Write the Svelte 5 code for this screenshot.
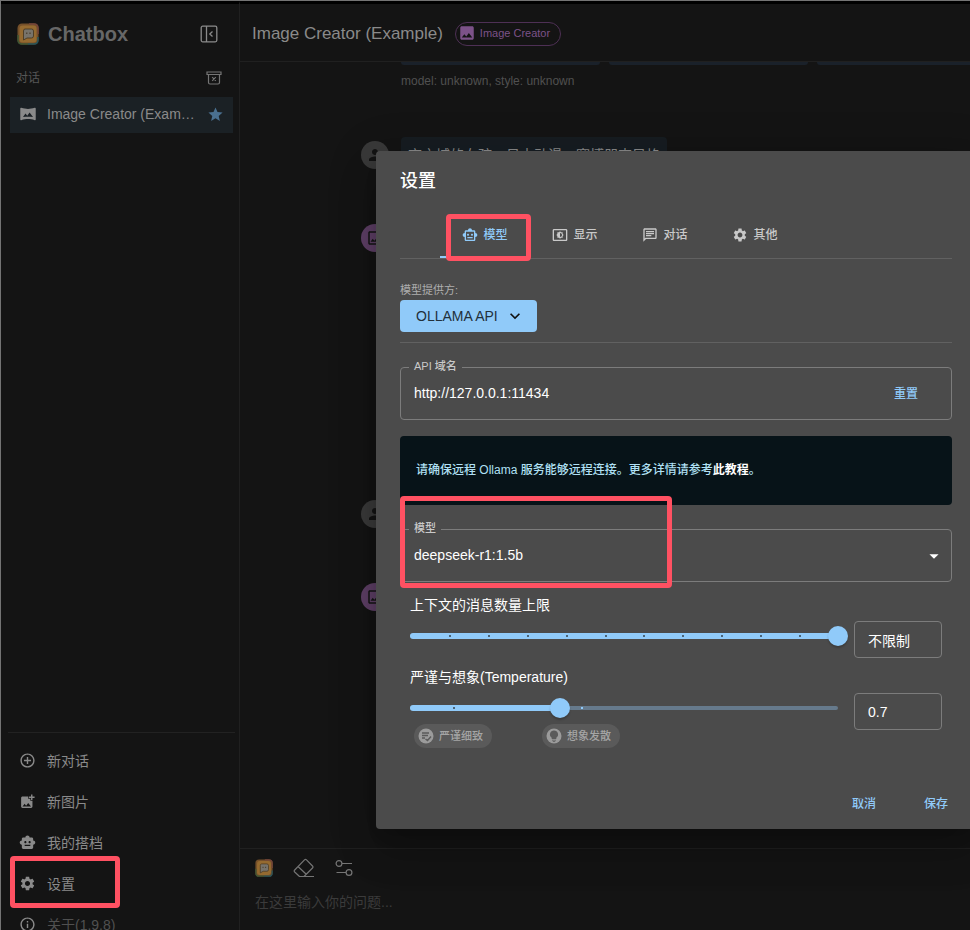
<script>
  const icons = {
    image: 'M21 19V5c0-1.1-.9-2-2-2H5c-1.1 0-2 .9-2 2v14c0 1.1.9 2 2 2h14c1.1 0 2-.9 2-2zM8.5 13.5l2.5 3.01L14.5 12l4.5 6H5l3.5-4.5z',
    imageOutline: 'M19 5v14H5V5h14m0-2H5c-1.1 0-2 .9-2 2v14c0 1.1.9 2 2 2h14c1.1 0 2-.9 2-2V5c0-1.1-.9-2-2-2zm-4.86 8.86-3 3.87L9 13.14 6 17h12l-3.86-5.14z',
    pano: 'M22.2 2.8C18.500 4 15 4.400 12 4.400S5.500 4 1.800 2.800C1 2.600.4 3 .4 3.900v16.200c0 .9.6 1.300 1.400 1.100 3.700-1.200 7.200-1.600 10.200-1.600s6.500.4 10.200 1.600c.8.200 1.400-.2 1.400-1.100V3.900c0-.9-.6-1.300-1.400-1.100zM4.500 16.500l3.700-5.300 2.700 3.500 3.500-5 5.100 6.800c-5-.7-10-.7-15 0z',
    star: 'M12 17.27 18.18 21l-1.64-7.03L22 9.24l-7.19-.61L12 2 9.19 8.63 2 9.24l5.46 4.73L5.82 21z',
    settings: 'M19.14 12.94c.04-.3.06-.61.06-.94 0-.32-.02-.64-.07-.94l2.03-1.58c.18-.14.23-.41.12-.61l-1.92-3.32c-.12-.22-.37-.29-.59-.22l-2.39.96c-.5-.38-1.03-.7-1.62-.94l-.36-2.54c-.04-.24-.24-.41-.48-.41h-3.84c-.24 0-.43.17-.47.41l-.36 2.54c-.59.24-1.13.57-1.62.94l-2.39-.96c-.22-.08-.47 0-.59.22L2.74 8.87c-.12.21-.08.47.12.61l2.03 1.58c-.05.3-.09.63-.09.94s.02.64.07.94l-2.03 1.58c-.18.14-.23.41-.12.61l1.92 3.32c.12.22.37.29.59.22l2.39-.96c.5.38 1.03.7 1.62.94l.36 2.54c.05.24.24.41.48.41h3.84c.24 0 .44-.17.47-.41l.36-2.54c.59-.24 1.13-.56 1.62-.94l2.39.96c.22.08.47 0 .59-.22l1.92-3.32c.12-.22.07-.47-.12-.61l-2.01-1.58zM12 15.6c-1.98 0-3.6-1.62-3.6-3.6s1.62-3.6 3.6-3.6 3.6 1.62 3.6 3.6-1.62 3.6-3.6 3.6z',
    robot: 'M20 9V7c0-1.1-.9-2-2-2h-3c0-1.66-1.34-3-3-3S9 3.34 9 5H6c-1.1 0-2 .9-2 2v2c-1.66 0-3 1.34-3 3s1.34 3 3 3v4c0 1.1.9 2 2 2h12c1.1 0 2-.9 2-2v-4c1.66 0 3-1.34 3-3s-1.34-3-3-3zM7.5 11.5c0-.83.67-1.5 1.5-1.5s1.5.67 1.5 1.5S9.83 13 9 13s-1.5-.67-1.5-1.5zM16 17H8v-2h8v2zm-1-4c-.83 0-1.5-.67-1.5-1.5S14.17 10 15 10s1.5.67 1.5 1.5S15.83 13 15 13z',
    robotOutline: 'M20 9V7c0-1.1-.9-2-2-2h-3c0-1.66-1.34-3-3-3S9 3.34 9 5H6c-1.1 0-2 .9-2 2v2c-1.66 0-3 1.34-3 3s1.34 3 3 3v4c0 1.1.9 2 2 2h12c1.1 0 2-.9 2-2v-4c1.66 0 3-1.34 3-3s-1.34-3-3-3zm-2 10H6V7h12v12zm-9-6c-.83 0-1.5-.67-1.5-1.5S8.17 10 9 10s1.5.67 1.5 1.5S9.83 13 9 13zm7.5-1.5c0 .83-.67 1.5-1.5 1.5s-1.5-.67-1.5-1.5.67-1.5 1.5-1.5 1.5.67 1.5 1.5zM8 15h8v2H8v-2z',
    brightness: 'M21 3H3c-1.1 0-2 .9-2 2v14c0 1.1.9 2 2 2h18c1.1 0 2-.9 2-2V5c0-1.1-.9-2-2-2zm0 16.01H3V4.99h18v14.02zM8 16h2.5l1.5 1.5 1.5-1.5H16v-2.5l1.5-1.5-1.5-1.5V8h-2.5L12 6.5 10.5 8H8v2.5L6.5 12 8 13.5V16zm4-7c1.66 0 3 1.34 3 3s-1.34 3-3 3V9z',
    chat: 'M4 4h16v12H5.17L4 17.17V4m0-2c-1.1 0-1.99.9-1.99 2L2 22l4-4h14c1.1 0 2-.9 2-2V4c0-1.1-.9-2-2-2H4zm2 10h8v2H6v-2zm0-3h12v2H6V9zm0-3h12v2H6V6z',
    add: 'M13 7h-2v4H7v2h4v4h2v-4h4v-2h-4V7zm-1-5C6.48 2 2 6.48 2 12s4.48 10 10 10 10-4.48 10-10S17.52 2 12 2zm0 18c-4.41 0-8-3.59-8-8s3.59-8 8-8 8 3.59 8 8-3.59 8-8 8z',
    addPhoto: 'M19 7v2.99s-1.99.01-2 0V7h-3s.01-1.99 0-2h3V2h2v3h3v2h-3zm-3 4V8h-3V5H5c-1.1 0-2 .9-2 2v12c0 1.1.9 2 2 2h12c1.1 0 2-.9 2-2v-8h-3zM5 19l3-4 2 3 3-4 4 5H5z',
    info: 'M11 7h2v2h-2zm0 4h2v6h-2zm1-9C6.48 2 2 6.48 2 12s4.48 10 10 10 10-4.48 10-10S17.52 2 12 2zm0 18c-4.41 0-8-3.59-8-8s3.59-8 8-8 8 3.59 8 8-3.59 8-8 8z',
    person: 'M12 12c2.21 0 4-1.79 4-4s-1.79-4-4-4-4 1.79-4 4 1.79 4 4 4zm0 2c-2.67 0-8 1.34-8 4v2h16v-2c0-2.66-5.33-4-8-4z',
    down: 'M7.41 8.59 12 13.17l4.59-4.58L18 10l-6 6-6-6 1.41-1.41z',
    drop: 'M7 10l5 5 5-5z'
  };

  const nav = [
    { icon: 'add', text: '新对话' },
    { icon: 'addPhoto', text: '新图片' },
    { icon: 'robot', text: '我的搭档' },
    { icon: 'settings', text: '设置', marked: true },
    { icon: 'info', text: '关于(1.9.8)', dim: true }
  ];
  const tabs = [
    { icon: 'robotOutline', text: '模型' },
    { icon: 'brightness', text: '显示' },
    { icon: 'chat', text: '对话' },
    { icon: 'settings', text: '其他' }
  ];

  let activeTab = $state(0);
  let host = $state('http://127.0.0.1:11434');
  let model = $state('deepseek-r1:1.5b');
  let context = $state(22);
  let temperature = $state(0.7);
  const contextText = $derived(context >= 22 ? '不限制' : String(context));
  const contextMarks = [2, 4, 6, 8, 10, 12, 14, 16, 18, 20];
  const temperatureMarks = [0.2, 0.8];
</script>

{#snippet icon(name, size)}
  <svg class="icon" width={size} height={size} viewBox="0 0 24 24" aria-hidden="true"><path d={icons[name]} /></svg>
{/snippet}

{#snippet logo(size)}
  <svg width={size} height={size} viewBox="0 0 22 22" aria-hidden="true">
    <rect x="0.5" y="0.5" width="21" height="21" rx="4.5" fill="#75502a" />
    <path d="M12 1h5q4 0 4 4v6" fill="none" stroke="#74443a" stroke-width="1.5" />
    <path d="M1 12v5q0 4 4 4h6" fill="none" stroke="#3d5634" stroke-width="1.5" />
    <path d="M11 21h6q4 0 4-4v-3" fill="none" stroke="#26545a" stroke-width="1.5" />
    <rect x="2.5" y="2.5" width="17" height="17" rx="3" fill="#956a30" />
    <path d="M8 6h6.500q2 0 2 2v5q0 2-2 2H10l-3.500 2V8q0-2 1.500-2z" fill="#77736b" stroke="#40331f" stroke-width="0.800" />
    <path d="M9.800 9.500v1.500M13 9.500v1.500" stroke="#40331f" stroke-width="1" />
  </svg>
{/snippet}

{#snippet track(percent, marks, max)}
  <span class="rail"></span>
  <span class="fill" style="width: {percent}%"></span>
  {#each marks as mark}
    <span class="tick" class:light={(mark / max) * 100 > percent} style="left: {(mark / max) * 100}%"></span>
  {/each}
{/snippet}

<div class="window">
  <div class="shell">
    <aside>
      <div class="brand">
        {@render logo(22)}
        <h1>Chatbox</h1>
        <button class="plain" aria-label="收起">
          <svg width="18" height="18" viewBox="0 0 18 18" fill="none" stroke="currentColor" stroke-width="1.3">
            <rect x="1.2" y="1.2" width="15.6" height="15.6" rx="1.5" />
            <path d="M6.5 1v16M12.5 6.500 9.800 9l2.700 2.500" />
          </svg>
        </button>
      </div>
      <div class="section">
        <span>对话</span>
        <button class="plain" aria-label="清理">
          <svg width="16" height="14" viewBox="0 0 16 14" fill="none" stroke="currentColor" stroke-width="1.2">
            <path d="M1 1h14v2.500H1zM2.500 3.500v8q0 1.500 1.500 1.500h8q1.500 0 1.500-1.500v-8M6.200 6.200l3.600 3.600M9.800 6.200 6.200 9.800" />
          </svg>
        </button>
      </div>
      <button class="session">
        {@render icon('pano', 16)}
        <span>Image Creator (Example)</span>
        <i class="star">{@render icon('star', 17)}</i>
      </button>
      <nav>
        {#each nav as item}
          <button class:dim={item.dim} class:marked={item.marked}>
            {@render icon(item.icon, 17)}
            <span>{item.text}</span>
          </button>
        {/each}
      </nav>
    </aside>

    <main>
      <header>
        <h2>Image Creator (Example)</h2>
        <button class="role">{@render icon('image', 18)}<span>Image Creator</span></button>
      </header>
      <div class="messages">
        <div class="pictures"><span></span><span></span><span></span></div>
        <p class="meta">model: unknown, style: unknown</p>
        <div class="row short">
          <span class="avatar">{@render icon('person', 18)}</span>
          <p class="bubble">夜之城的女孩，日本动漫，赛博朋克风格</p>
        </div>
        <div class="row tall"><span class="avatar purple">{@render icon('imageOutline', 18)}</span></div>
        <div class="row short"><span class="avatar">{@render icon('person', 18)}</span></div>
        <div class="row"><span class="avatar purple">{@render icon('imageOutline', 18)}</span></div>
      </div>
      <footer>
        <div class="tools">
          <button class="plain" aria-label="Chatbox">{@render logo(18)}</button>
          <button class="plain" aria-label="清空">
            <svg width="22" height="20" viewBox="0 0 22 20" fill="none" stroke="currentColor" stroke-width="1.2" stroke-linejoin="round">
              <path d="M6 18.500h15M6.500 18.500 1.700 14q-1-1 0-2L11.500 1.800q1-1 2 0L19.500 8q1 1 0 2L11 18.500M5 8.500l8.500 8" />
            </svg>
          </button>
          <button class="plain" aria-label="参数">
            <svg width="18" height="18" viewBox="0 0 18 18" fill="none" stroke="currentColor" stroke-width="1.2">
              <circle cx="4" cy="4.5" r="2.9" /><path d="M7 4.500h10M1.500 13.500H11" /><circle cx="14" cy="13.5" r="2.9" />
            </svg>
          </button>
        </div>
        <input class="prompt" aria-label="问题" placeholder="在这里输入你的问题..." />
      </footer>
    </main>
  </div>

  <div class="dialog" role="dialog" aria-labelledby="dialog-title">
    <h2 id="dialog-title">设置</h2>
    <div class="tabs" role="tablist">
      {#each tabs as tab, i}
        <button role="tab" aria-selected={activeTab === i} class:active={activeTab === i} class:marked={i === 0} onclick={() => (activeTab = i)}>
          {@render icon(tab.icon, 16)}
          <span>{tab.text}</span>
        </button>
      {/each}
    </div>

    <div class="provider">
      <span class="caption">模型提供方:</span>
      <button>OLLAMA API {@render icon('down', 20)}</button>
    </div>

    <div class="field host">
      <label for="host">API 域名</label>
      <input id="host" bind:value={host} />
      <button class="link">重置</button>
    </div>

    <p class="alert">请确保远程 Ollama 服务能够远程连接。更多详情请参考<a href="#tutorial">此教程</a>。</p>

    <div class="field marked">
      <label for="model">模型</label>
      <select id="model" bind:value={model}>
        <option>deepseek-r1:1.5b</option>
      </select>
      <i class="arrow">{@render icon('drop', 22)}</i>
    </div>

    <div class="setting">
      <label for="context">上下文的消息数量上限</label>
      <div class="control">
        <div class="slider">
          {@render track((context / 22) * 100, contextMarks, 22)}
          <input id="context" type="range" min="0" max="22" step="2" bind:value={context} />
        </div>
        <input class="value" aria-label="消息数量" value={contextText} />
      </div>
    </div>

    <div class="setting">
      <label for="temperature">严谨与想象(Temperature)</label>
      <div class="control">
        <div class="slider">
          {@render track((temperature / 2) * 100, temperatureMarks, 2)}
          <input id="temperature" type="range" min="0" max="2" step="0.1" bind:value={temperature} />
        </div>
        <input class="value" aria-label="Temperature" value={temperature} />
      </div>
    </div>
    <div class="chips">
      <span class="chip">
        <svg width="16" height="16" viewBox="0 0 16 16" aria-hidden="true">
          <circle cx="8" cy="8" r="7.5" fill="#9b9b9b" />
          <path d="M4 5h7M4 7.500h6M4 10h3M7.500 11l2 1.500L13 8.500" fill="none" stroke="#5a5a5a" stroke-width="1.4" />
        </svg>
        严谨细致
      </span>
      <span class="chip">
        <svg width="16" height="16" viewBox="0 0 16 16" aria-hidden="true">
          <circle cx="8" cy="8" r="7.5" fill="#9b9b9b" />
          <path d="M8 2.500a4 4 0 0 0-2.300 7.300V11h4.600V9.800A4 4 0 0 0 8 2.500zM6 11.800h4v.8H6zM6.800 13.200h2.400v.8H6.800z" fill="#5a5a5a" />
        </svg>
        想象发散
      </span>
    </div>

    <div class="actions">
      <button class="link">取消</button>
      <button class="link">保存</button>
    </div>
  </div>
</div>

<style>
  :global(body) {
    margin: 0;
    background: #141414;
  }
  .window {
    position: relative;
    box-sizing: border-box;
    height: 100vh;
    overflow: hidden;
    border-left: 1px solid #747474;
    font: 14px/20px 'Liberation Sans', 'Noto Sans CJK SC', sans-serif;
    color: #8a8a8a;
    background: #141414;
  }
  .window :global(*) {
    box-sizing: border-box;
  }
  h1, h2, p {
    margin: 0;
  }
  button, input, select {
    margin: 0;
    padding: 0;
    border: 0;
    outline: 0;
    background: none;
    font: inherit;
    color: inherit;
  }
  .icon {
    display: block;
    flex: none;
    fill: currentColor;
  }
  i {
    display: flex;
  }
  .plain {
    display: flex;
  }
  .marked {
    position: relative;
  }
  .marked::after {
    content: '';
    position: absolute;
    z-index: 2;
    box-sizing: border-box;
    border: 5px solid #ff5162;
    border-radius: 4px;
    pointer-events: none;
  }

  .shell {
    display: flex;
    height: calc(100vh + 16px);
    border-top: 1px solid #747474;
  }
  .shell > * {
    border-top: 3px solid #000;
  }
  aside {
    display: flex;
    flex-direction: column;
    flex: none;
    width: 239px;
    padding: 0 6px 0 9px;
    border-right: 1px solid #202020;
  }
  .brand {
    display: flex;
    align-items: center;
    gap: 9px;
    height: 60px;
    padding: 0 15px 0 7px;
  }
  .brand h1 {
    flex: 1;
    font-size: 20px;
    line-height: 24px;
    color: #676767;
  }
  .section {
    display: flex;
    align-items: center;
    justify-content: space-between;
    height: 33px;
    padding: 0 11px 6px 6px;
    font-size: 12px;
    color: #565656;
  }
  .section .plain {
    color: #757575;
  }
  .session {
    display: flex;
    align-items: center;
    gap: 11px;
    height: 36px;
    padding: 0 9px 2px 10px;
    text-align: left;
    background: #1b2125;
  }
  .session span {
    flex: 1;
    overflow: hidden;
    white-space: nowrap;
    text-overflow: ellipsis;
  }
  .star {
    color: #4a7090;
  }
  nav {
    display: flex;
    flex-direction: column;
    margin: auto -2px 0 -2px;
    padding-top: 8px;
    border-top: 1px solid #222;
  }
  nav button {
    display: flex;
    align-items: center;
    gap: 11px;
    height: 41px;
    padding: 0 0 2px 11px;
  }
  nav .dim span {
    color: #505050;
  }
  nav .marked::after {
    left: 2px;
    top: -8px;
    width: 110px;
    height: 52px;
  }

  main {
    display: flex;
    flex: 1;
    flex-direction: column;
    min-width: 0;
  }
  header {
    display: flex;
    align-items: center;
    gap: 12px;
    flex: none;
    height: 58px;
    padding: 2px 12px 0;
    border-bottom: 1px solid #202020;
  }
  header h2 {
    font-size: 17px;
    font-weight: 400;
    line-height: 24px;
  }
  .role {
    display: flex;
    align-items: center;
    gap: 4px;
    height: 24px;
    padding: 0 10px 2px 2px;
    border: 1px solid #4e3055;
    border-radius: 12px;
    font-size: 11px;
    color: #7c5288;
  }
  .messages {
    flex: 1;
    min-height: 0;
    padding-left: 121px;
    overflow: hidden;
  }
  .pictures {
    display: flex;
    gap: 9px;
    height: 3px;
    padding-left: 40px;
  }
  .pictures span {
    flex: none;
    width: 199px;
    border-radius: 0 0 5px 5px;
    background: #1a212a;
  }
  .meta {
    padding: 6px 0 46px 40px;
    font-size: 12px;
    font-weight: 500;
    color: #505050;
  }
  .row {
    display: flex;
    gap: 12px;
  }
  .row.short {
    height: 83px;
  }
  .row.tall {
    height: 276px;
  }
  .avatar {
    display: flex;
    align-items: center;
    justify-content: center;
    flex: none;
    width: 28px;
    height: 28px;
    margin-top: 4px;
    border-radius: 50%;
    color: #141414;
    background: #3a3a3a;
  }
  .avatar.purple {
    background: #5f4067;
  }
  .bubble {
    align-self: flex-start;
    padding: 8px 7px;
    border-radius: 4px;
    background: #171d22;
  }
  footer {
    display: flex;
    flex: none;
    flex-direction: column;
    gap: 14px;
    height: 98px;
    padding: 8px 15px;
    border-top: 1px solid #202020;
  }
  .tools {
    display: flex;
    align-items: center;
    gap: 20px;
    height: 21px;
    color: #757575;
  }
  .prompt::placeholder {
    opacity: 1;
    color: #3b3b3b;
  }

  .dialog {
    position: absolute;
    top: 151px;
    right: -6px;
    left: 375px;
    padding: 0 24px 8px;
    border-radius: 4px;
    color: #fff;
    background: #4b4b4b;
    box-shadow: 0 11px 15px -7px #0003, 0 24px 38px 3px #00000024, 0 9px 46px 8px #0000001f;
  }
  .dialog > h2 {
    padding: 17px 0;
    font-size: 18px;
    font-weight: 500;
    line-height: 26px;
  }
  .tabs {
    display: flex;
    height: 48px;
    padding-left: 40px;
    border-bottom: 1px solid #616161;
    font-size: 12px;
  }
  .tabs button {
    display: flex;
    align-items: center;
    justify-content: center;
    gap: 5px;
    width: 90px;
    font-weight: 500;
    color: #c9c9c9;
  }
  .tabs .active {
    border-top: 2px solid transparent;
    border-bottom: 2px solid #90caf9;
    color: #90caf9;
  }
  .tabs .marked::after {
    left: 6px;
    top: 1px;
    width: 85px;
    height: 47px;
  }
  .provider {
    display: flex;
    flex-direction: column;
    align-items: flex-start;
    padding: 21px 0 10px;
    border-bottom: 1px solid #616161;
  }
  .caption {
    font-size: 11px;
    line-height: 20px;
    color: #aeaeae;
  }
  .provider button {
    display: flex;
    align-items: center;
    gap: 7px;
    height: 32px;
    padding: 0 12px 1px 16px;
    border-radius: 4px;
    color: #22303b;
    background: #90caf9;
  }
  .provider .icon {
    fill: #111;
  }
  .field {
    position: relative;
    display: flex;
    align-items: center;
    height: 53px;
    margin-top: 24px;
    padding: 0 13px;
    border: 1px solid #7c7c7c;
    border-radius: 4px;
  }
  .field label {
    position: absolute;
    top: -10px;
    left: 8px;
    padding: 0 5px;
    font-size: 11px;
    font-weight: 500;
    line-height: 16px;
    color: #c9c9c9;
    background: #4b4b4b;
  }
  .field input,
  .field select {
    flex: 1;
    height: 100%;
    min-width: 0;
    padding-bottom: 2px;
  }
  .field select {
    appearance: none;
  }
  .field option {
    background: #4b4b4b;
  }
  .field.host {
    padding-right: 33px;
  }
  .arrow {
    position: absolute;
    right: 6px;
    pointer-events: none;
  }
  .field.marked::after {
    top: -34px;
    left: -1px;
    width: 272px;
    height: 92px;
  }
  .link {
    font-size: 12px;
    font-weight: 500;
    color: #90caf9;
  }
  .alert {
    margin-top: 16px;
    padding: 24px 16px 25px;
    border-radius: 4px;
    font-size: 12px;
    font-weight: 500;
    color: #b0e0f4;
    background: #071318;
  }
  .alert a {
    font-weight: 700;
    color: #fff;
    text-decoration: none;
  }
  .setting {
    padding: 13px 10px 0;
  }
  .setting label {
    display: block;
  }
  .setting + .setting {
    padding-top: 9px;
  }
  .control {
    display: flex;
    align-items: flex-start;
    gap: 16px;
    height: 43px;
    padding-top: 6px;
  }
  .slider {
    position: relative;
    flex: 1;
    height: 20px;
    margin-top: 5px;
  }
  .rail, .fill {
    position: absolute;
    top: 8px;
    left: 0;
    width: 100%;
    height: 4px;
    border-radius: 3px;
    background: #667a8c;
  }
  .fill {
    top: 7px;
    height: 6px;
    background: #90caf9;
  }
  .tick {
    position: absolute;
    top: 9px;
    width: 2px;
    height: 2px;
    background: #4b6377;
  }
  .tick.light {
    background: #90caf9;
  }
  .slider input {
    position: absolute;
    top: 0;
    left: -10px;
    width: calc(100% + 20px);
    height: 20px;
    appearance: none;
  }
  .slider input::-webkit-slider-thumb {
    width: 20px;
    height: 20px;
    border-radius: 50%;
    appearance: none;
    background: #90caf9;
    box-shadow: 0 2px 2px #0003;
  }
  .value {
    width: 88px;
    height: 37px;
    padding: 0 13px;
    border: 1px solid #7c7c7c;
    border-radius: 4px;
  }
  .chips {
    display: flex;
    gap: 50px;
    margin-top: -6px;
    padding-left: 14px;
  }
  .chip {
    display: flex;
    align-items: center;
    gap: 5px;
    height: 24px;
    padding: 0 9px 0 4px;
    border-radius: 12px;
    font-size: 11px;
    font-weight: 500;
    color: #a5a5a5;
    background: #5a5a5a;
  }
  .actions {
    display: flex;
    justify-content: flex-end;
    gap: 24px;
    padding: 38px 0 0;
    margin-right: -8px;
  }
  .actions button {
    width: 48px;
    height: 35px;
  }
</style>
